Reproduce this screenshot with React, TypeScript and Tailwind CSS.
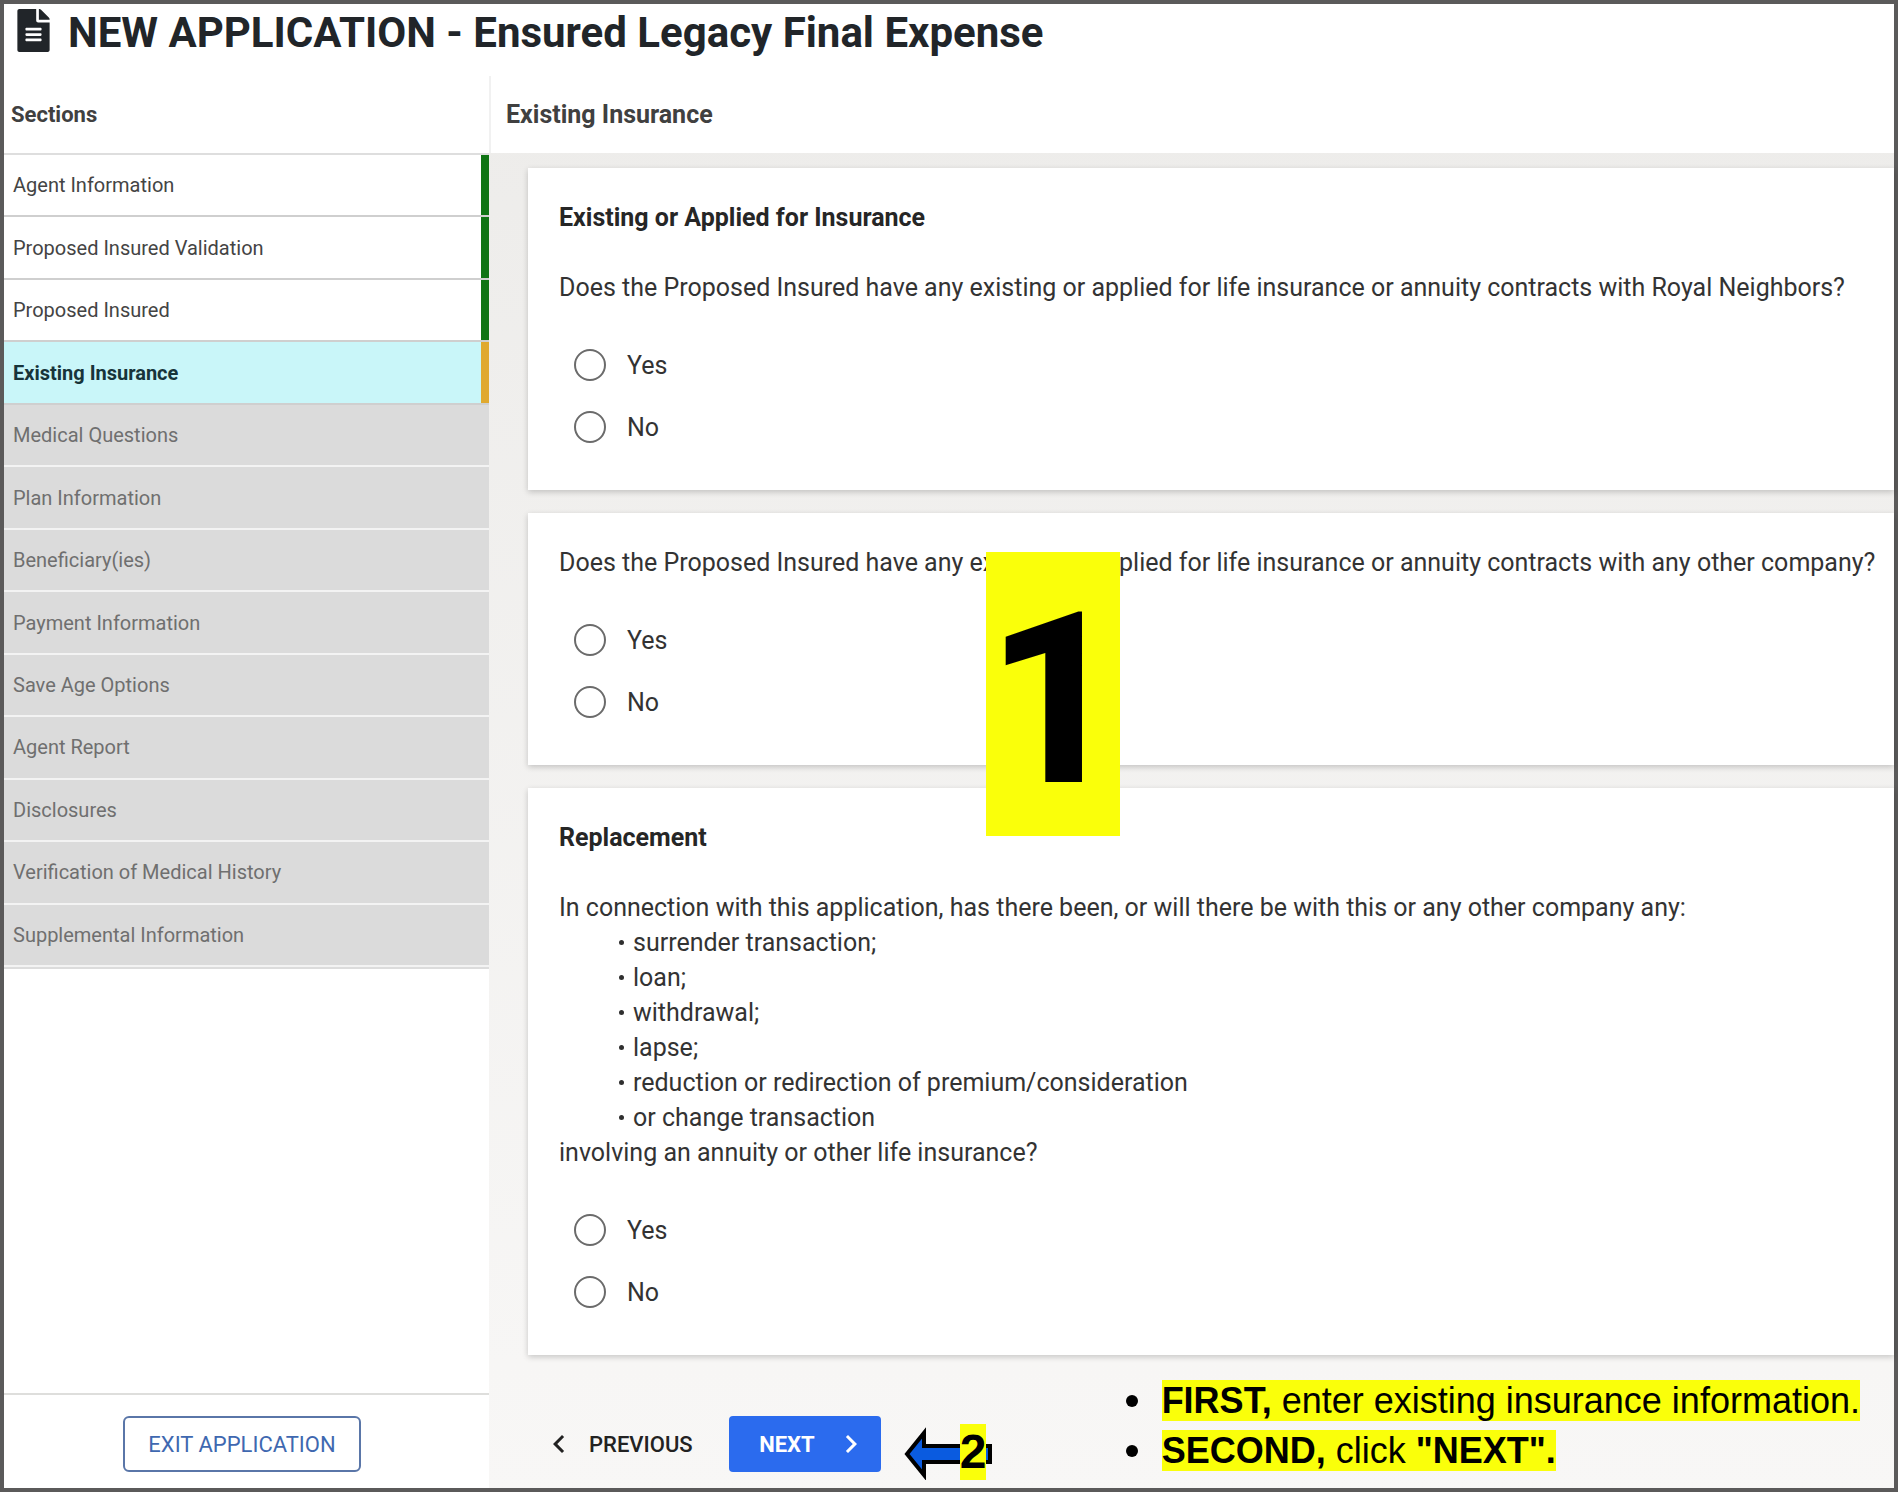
import React from 'react';
import clsx from 'clsx';
import { FaFileAlt } from 'react-icons/fa';
import { MdChevronLeft, MdChevronRight } from 'react-icons/md';

type SectionStatus = 'done' | 'active' | 'disabled';

const sections: { label: string; status: SectionStatus }[] = [
  { label: 'Agent Information', status: 'done' },
  { label: 'Proposed Insured Validation', status: 'done' },
  { label: 'Proposed Insured', status: 'done' },
  { label: 'Existing Insurance', status: 'active' },
  { label: 'Medical Questions', status: 'disabled' },
  { label: 'Plan Information', status: 'disabled' },
  { label: 'Beneficiary(ies)', status: 'disabled' },
  { label: 'Payment Information', status: 'disabled' },
  { label: 'Save Age Options', status: 'disabled' },
  { label: 'Agent Report', status: 'disabled' },
  { label: 'Disclosures', status: 'disabled' },
  { label: 'Verification of Medical History', status: 'disabled' },
  { label: 'Supplemental Information', status: 'disabled' },
];

const replacementItems = [
  'surrender transaction;',
  'loan;',
  'withdrawal;',
  'lapse;',
  'reduction or redirection of premium/consideration',
  'or change transaction',
];

const Card: React.FC<{ title?: string; children: React.ReactNode }> = ({ title, children }) => (
  <section className="bg-white py-8 pr-2 pl-[31px] text-[25px]/[35px] text-[#333] shadow-[0_2px_6px_rgba(0,0,0,0.2)]">
    {title && <h3 className="mb-[35px] font-bold text-[#262626]">{title}</h3>}
    {children}
  </section>
);

const YesNo: React.FC<{ name: string; labelledBy: string }> = ({ name, labelledBy }) => (
  <div role="radiogroup" aria-labelledby={labelledBy} className="mt-[29px] pl-[15px]">
    {['Yes', 'No'].map((option) => (
      <label key={option} className="flex h-[62px] w-fit items-center gap-[21px]">
        <input
          type="radio"
          name={name}
          value={option}
          className="size-8 appearance-none rounded-full border-2 border-[#6b6b6b] bg-white checked:border-8 checked:border-[#2a6bee]"
        />
        {option}
      </label>
    ))}
  </div>
);

const Sidebar: React.FC = () => (
  <aside className="flex w-[485px] shrink-0 flex-col bg-white">
    <h2 className="flex h-[79px] items-center border-b-2 border-[#dedede] pl-[7px] text-[22px] font-bold text-[#404040]">
      Sections
    </h2>
    <nav className="flex min-h-[814px] flex-col border-b-2 border-[#dcdcdc]">
      {sections.map(({ label, status }) => (
        <a
          key={label}
          href="#"
          className={clsx(
            'flex flex-1 items-center border-b-2 pl-[9px] text-xl',
            status === 'done' && 'border-[#cfcfcf] bg-white text-[#444] shadow-[inset_-8px_0_#0f7414]',
            status === 'active' && 'border-[#cfcfcf] bg-[#c9f6f9] font-bold text-[#17343a] shadow-[inset_-8px_0_#e0a92f]',
            status === 'disabled' && 'border-[#f3f3f3] bg-[#dbdbdb] text-[#6f6f6f]',
          )}
        >
          {label}
        </a>
      ))}
    </nav>
    <div className="mt-auto flex justify-center border-t-2 border-[#dededc] pt-[21px] pr-[9px] pb-4">
      <button
        type="button"
        className="h-14 w-[238px] rounded-md border-2 border-[#5a76a8] text-[22px] text-[#3f68b0]"
      >
        EXIT APPLICATION
      </button>
    </div>
  </aside>
);

const StepArrow: React.FC = () => (
  <div className="relative h-14 w-[88px]">
    <svg viewBox="0 0 88 56" className="h-14 w-[88px]" aria-hidden="true">
      <path
        d="M3 30 L20 9 V22 H86 V38 H20 V51 Z"
        fill="#0a5be0"
        stroke="#000"
        strokeWidth="4"
      />
    </svg>
    <span className="absolute top-0 left-14 w-[26px] bg-[#faff0a] text-center font-['Liberation_Sans',sans-serif] text-5xl/[56px] font-bold text-black">
      2
    </span>
  </div>
);

const App: React.FC = () => {
  return (
    <div className="flex min-h-screen flex-col border-4 border-[#5b5a5a] bg-white font-[Roboto,sans-serif]">
      <header className="flex h-[72px] items-start gap-[18px] pl-[13px]">
        <FaFileAlt className="mt-[5px] h-[43px] w-[33px] text-[#212529]" />
        <h1 className="text-[42px]/[58px] font-bold text-[#212529]">
          NEW APPLICATION - Ensured Legacy Final Expense
        </h1>
      </header>

      <div className="flex flex-1">
        <Sidebar />

        <main className="relative flex min-w-0 flex-1 flex-col bg-linear-to-b from-[#edecea] to-[#f8f7f6]">
          <h2 className="flex h-[77px] items-center border-l-2 border-[#f1f1f1] bg-white pl-[15px] text-[25px] font-bold text-[#404040]">
            Existing Insurance
          </h2>

          <div className="flex flex-col gap-[23px] pt-[15px] pl-[39px]">
            <Card title="Existing or Applied for Insurance">
              <p id="q-royal">
                Does the Proposed Insured have any existing or applied for life insurance or annuity contracts with Royal Neighbors?
              </p>
              <YesNo name="royal" labelledBy="q-royal" />
            </Card>

            <Card>
              <p id="q-other">
                Does the Proposed Insured have any existing or applied for life insurance or annuity contracts with any other company?
              </p>
              <YesNo name="other" labelledBy="q-other" />
            </Card>

            <Card title="Replacement">
              <div id="q-replacement">
                <p>In connection with this application, has there been, or will there be with this or any other company any:</p>
                <ul className="pl-[60px]">
                  {replacementItems.map((item) => (
                    <li key={item} className="flex items-center gap-[9px]">
                      <span className="size-[5px] rounded-full bg-[#2f2f2f]" />
                      {item}
                    </li>
                  ))}
                </ul>
                <p>involving an annuity or other life insurance?</p>
              </div>
              <YesNo name="replacement" labelledBy="q-replacement" />
            </Card>
          </div>

          <footer className="mt-auto flex items-end pb-4 pl-[52px]">
            <button type="button" className="flex h-14 items-center gap-3 text-[22px] font-medium text-[#222]">
              <MdChevronLeft className="size-9" />
              PREVIOUS
            </button>
            <button
              type="button"
              className="ml-9 flex h-14 w-[152px] items-center justify-end gap-[18px] rounded-sm bg-[#2b6bee] pr-3 text-[22px] font-bold text-white"
            >
              NEXT
              <MdChevronRight className="size-9" />
            </button>
            <div className="ml-[23px] -mb-2">
              <StepArrow />
            </div>
            <ul className="ml-[134px] -mb-1 font-['Liberation_Sans',sans-serif] text-4xl/[50px] text-black">
              <li className="flex items-center gap-6">
                <span className="size-3 rounded-full bg-black" />
                <span>
                  <span className="bg-[#faff0a]">
                    <b>FIRST,</b> enter existing insurance information.
                  </span>
                </span>
              </li>
              <li className="flex items-center gap-6">
                <span className="size-3 rounded-full bg-black" />
                <span>
                  <span className="bg-[#faff0a]">
                    <b>SECOND,</b> click <b>"NEXT".</b>
                  </span>
                </span>
              </li>
            </ul>
          </footer>

          <div className="absolute top-[476px] left-[497px] h-[284px] w-[134px] bg-[#faff0a] pt-3 pr-2 text-center text-[240px]/[272px] font-extrabold text-black">
            1
          </div>
        </main>
      </div>
    </div>
  );
};

export default App;
